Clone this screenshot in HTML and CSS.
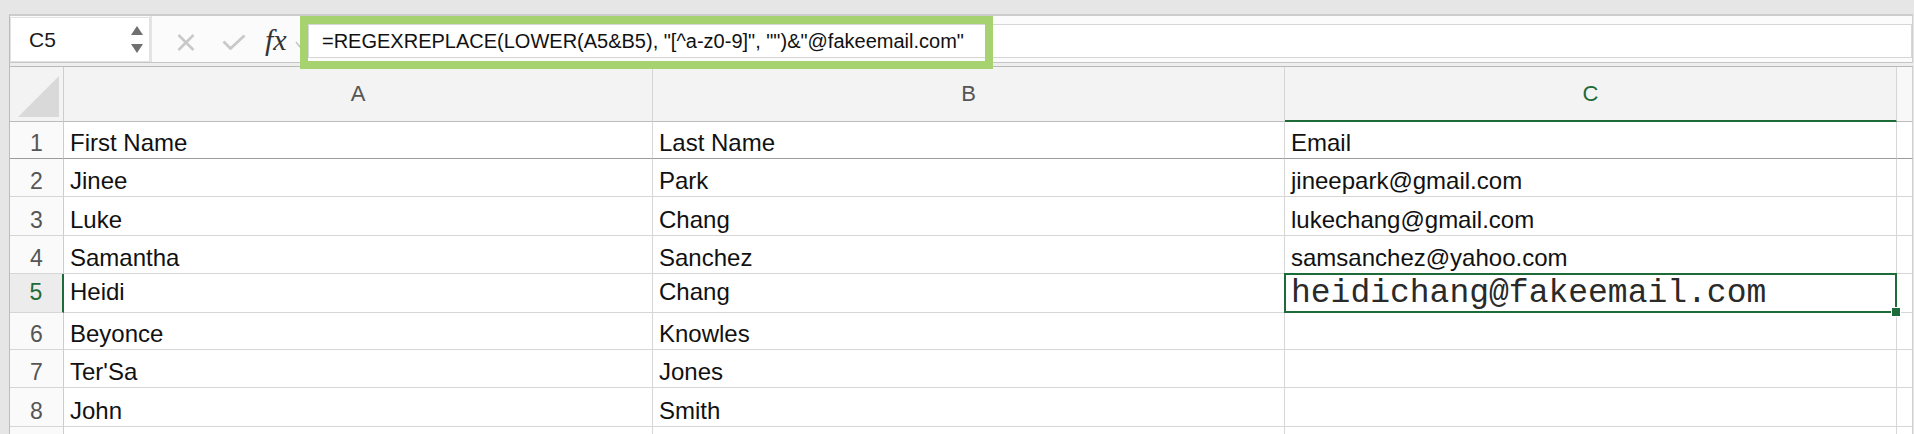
FILE: index.html
```html
<!DOCTYPE html>
<html>
<head>
<meta charset="utf-8">
<link rel="stylesheet" href="styles.css">
</head>
<body>
<div class="app">
  <div class="topstrip"></div>
  <div class="fbar">
    <div class="namebox">
      <span class="ref">C5</span>
      <span class="spin">
        <svg width="12" height="9" viewBox="0 0 12 9"><path d="M6 0 L12 9 L0 9 Z" fill="#707070"/></svg>
        <svg width="12" height="9" viewBox="0 0 12 9"><path d="M0 0 L12 0 L6 9 Z" fill="#707070"/></svg>
      </span>
    </div>
    <div class="tools">
      <svg class="ico-x" width="18" height="17" viewBox="0 0 18 17"><path d="M1.5 1 L16.5 16 M16.5 1 L1.5 16" stroke="#c9c9c9" stroke-width="2.6" fill="none"/></svg>
      <svg class="ico-ok" width="24" height="16" viewBox="0 0 24 16"><path d="M1.5 7.5 L8.5 14.5 L22.5 1.5" stroke="#c9c9c9" stroke-width="2.8" fill="none"/></svg>
      <span class="fx">fx</span>
      <svg class="ico-chev" width="9" height="7" viewBox="0 0 9 7"><path d="M1 1 L4.5 5.5 L8 1" stroke="#c4c4c4" stroke-width="1.4" fill="none"/></svg>
    </div>
    <div class="finput"><span class="ftext">=REGEXREPLACE(LOWER(A5&amp;B5), "[^a-z0-9]", "")&amp;"@fakeemail.com"</span></div>
    <div class="callout"></div>
  </div>
  <div class="fgap"></div>
  <div class="sheet">
    <div class="corner"><svg width="44" height="44" viewBox="0 0 44 44"><path d="M2 43 L43 2 L43 43 Z" fill="#d9d9d9"/></svg></div>
    <div class="colhead">A</div>
    <div class="colhead">B</div>
    <div class="colhead sel">C</div>
    <div class="colhead extra"></div>

    <div class="rowhead frz">1</div><div class="cell frz">First Name</div><div class="cell frz">Last Name</div><div class="cell frz">Email</div><div class="cell extra frz"></div>
    <div class="rowhead">2</div><div class="cell">Jinee</div><div class="cell">Park</div><div class="cell">jineepark@gmail.com</div><div class="cell extra"></div>
    <div class="rowhead">3</div><div class="cell">Luke</div><div class="cell">Chang</div><div class="cell">lukechang@gmail.com</div><div class="cell extra"></div>
    <div class="rowhead">4</div><div class="cell">Samantha</div><div class="cell">Sanchez</div><div class="cell">samsanchez@yahoo.com</div><div class="cell extra"></div>
    <div class="rowhead sel r5">5</div><div class="cell r5">Heidi</div><div class="cell r5">Chang</div><div class="cell active"><span class="mono">heidichang@fakeemail.com</span></div><div class="cell extra"></div>
    <div class="rowhead">6</div><div class="cell">Beyonce</div><div class="cell">Knowles</div><div class="cell"></div><div class="cell extra"></div>
    <div class="rowhead">7</div><div class="cell">Ter'Sa</div><div class="cell">Jones</div><div class="cell"></div><div class="cell extra"></div>
    <div class="rowhead">8</div><div class="cell">John</div><div class="cell">Smith</div><div class="cell"></div><div class="cell extra"></div>
    <div class="rowhead"></div><div class="cell"></div><div class="cell"></div><div class="cell"></div><div class="cell extra"></div>
  </div>
</div>
</body>
</html>
```
FILE: styles.css
```css
* { box-sizing: border-box; }
html, body { margin: 0; padding: 0; }
body {
  background: #e6e6e6;
  font-family: "Liberation Sans", Arial, sans-serif;
  color: #111;
  width: 1914px;
  height: 434px;
  overflow: hidden;
}
.app { position: relative; }
.topstrip { height: 14px; }

.fbar {
  position: relative;
  margin-left: 9px;
  width: 1904px;
  height: 49px;
  background: #fbfbfb;
  border-top: 2px solid #cccccc;
  border-left: 1px solid #c2b9b9;
  border-right: 1px solid #cfcfcf;
  border-bottom: 1px solid #c6c6c6;
  display: flex;
  align-items: flex-start;
}
.namebox {
  margin-top: 1px;
  width: 140px;
  height: 45px;
  background: #ffffff;
  border: 1px solid #e2e2e2;
  display: flex;
  align-items: center;
  justify-content: space-between;
  padding: 0 6px 0 18px;
}
.ref { font-size: 21px; color: #1a1a1a; }
.spin { display: flex; flex-direction: column; gap: 9px; }
.tools {
  width: 158px;
  height: 46px;
  border-left: 2px solid #e4e4e4;
  display: flex;
  align-items: center;
  padding-left: 25px;
  padding-top: 6px;
}
.ico-x { margin-right: 27px; }
.ico-ok { margin-right: 19px; }
.fx {
  font-family: "Liberation Serif", "Times New Roman", serif;
  font-style: italic;
  font-size: 30px;
  color: #333;
  line-height: 1;
  margin-top: -4px;
  margin-right: 8px;
}
.ico-chev { margin-top: 4px; }
.finput {
  flex: 1;
  margin-top: 8px;
  height: 34px;
  background: #ffffff;
  border: 1px solid #d6d6d6;
  display: flex;
  align-items: center;
  padding-left: 13px;
}
.ftext { font-size: 20px; color: #111; white-space: nowrap; }
.callout {
  position: absolute;
  left: 290px;
  top: 0px;
  width: 693px;
  height: 53px;
  border: 8px solid #a6d36f;
}
.fgap {
  margin-left: 9px;
  width: 1904px;
  height: 3px;
  background: #eeeeee;
  border-left: 1px solid #c2b9b9;
}

.sheet {
  margin-left: 9px;
  width: 1904px;
  border-left: 1px solid #c2b9b9;
  border-top: 1px solid #b9b9b9;
  background: #ffffff;
  display: grid;
  grid-template-columns: 54px 589px 632px 612px 16px;
  grid-template-rows: 55px 37px 38px 39px 38px 39px 37px 38px 39px 10px;
}
.corner {
  background: #f3f3f3;
  border-right: 1px solid #cdcdcd;
  border-bottom: 1px solid #bcbcbc;
  display: flex;
  align-items: flex-end;
  justify-content: flex-end;
  padding: 0 3px 3px 0;
}
.colhead {
  background: #f3f3f3;
  border-right: 1px solid #d6d6d6;
  border-bottom: 1px solid #bcbcbc;
  display: flex;
  align-items: center;
  justify-content: center;
  padding-bottom: 1px;
  font-size: 22px;
  color: #555;
}
.colhead.sel { color: #1d6b38; border-bottom: 2px solid #1d6b38; padding-bottom: 0; }
.colhead.extra { background: #f8f8f8; border-right: 1px solid #d0d0d0; }
.rowhead {
  background: #fafafa;
  border-right: 1px solid #cdcdcd;
  border-bottom: 1px solid #d6d6d6;
  display: flex;
  align-items: flex-end;
  justify-content: center;
  padding-bottom: 3px;
  font-size: 23px;
  line-height: 24px;
  color: #555;
}
.rowhead.sel { background: #ececec; color: #1d6b38; border-right: 2px solid #1d6b38; }
.cell {
  border-right: 1px solid #d6d6d6;
  border-bottom: 1px solid #d6d6d6;
  display: flex;
  align-items: flex-end;
  padding: 0 0 3px 6px;
  font-size: 24px;
  line-height: 24px;
  color: #111;
  white-space: nowrap;
}
.r5 { padding-bottom: 8px; }
.rowhead.r5 { padding-bottom: 8px; }
.cell.extra { border-right: 1px solid #d0d0d0; }
.frz { border-bottom: 1px solid #9c9c9c; }
.cell.active { position: relative; padding-left: 6px; padding-bottom: 3px; }
.cell.active::after {
  content: "";
  position: absolute;
  left: -1px;
  top: -1px;
  right: -1px;
  bottom: -1px;
  border: 2px solid #1d6b38;
}
.cell.active::before {
  content: "";
  position: absolute;
  right: -5px;
  bottom: -5px;
  width: 8px;
  height: 8px;
  background: #1d6b38;
  border: 1px solid #ffffff;
  z-index: 2;
}
.mono {
  font-family: "Liberation Mono", "Courier New", monospace;
  font-size: 33px;
  line-height: 30px;
  color: #2a2a2a;
}
```
